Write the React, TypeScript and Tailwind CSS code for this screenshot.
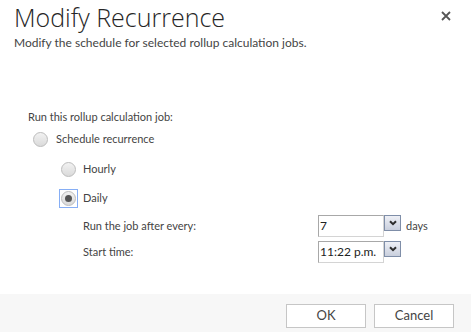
import { useState } from "react";

type RadioProps = {
  checked?: boolean;
  focused?: boolean;
};

function Radio({ checked, focused }: RadioProps) {
  return (
    <span
      className={`flex h-[19px] w-[19px] items-center justify-center ${
        focused ? "border border-[#86aef5]" : "border border-transparent"
      }`}
    >
      <span className="flex h-[15px] w-[15px] items-center justify-center rounded-full border border-[#bcbcbc] bg-gradient-to-b from-[#f2f2f2] to-[#dadada]">
        {checked && <span className="h-[7px] w-[7px] rounded-full bg-[#555]" />}
      </span>
    </span>
  );
}

function DropButton() {
  return (
    <span className="flex h-[16px] w-[17px] items-center justify-center border border-[#7f8ea8] bg-gradient-to-b from-[#eef0f6] to-[#c9cfdd]">
      <svg width="8" height="6" viewBox="0 0 8 6">
        <path d="M1 1.2 L4 4.2 L7 1.2" fill="none" stroke="#2d2d2d" strokeWidth="2" />
      </svg>
    </span>
  );
}

function Combo({ value }: { value: string }) {
  return (
    <div className="flex items-start">
      <div className="flex h-[22px] w-[66px] items-center border border-[#d4d4d4] border-l-[#a8a8a8] border-t-[#a8a8a8] bg-white pl-[1px] text-[12px] text-[#222]">
        {value}
      </div>
      <DropButton />
    </div>
  );
}

export default function App() {
  const [choice] = useState("daily");

  return (
    <div
      className="flex h-[332px] w-[471px] flex-col bg-white text-[#444]"
      style={{ fontFamily: 'Lato, "Open Sans", sans-serif' }}
    >
      <div className="px-[14px]">
        <div className="flex items-start justify-between">
          <h1
            className="text-[25px] font-light leading-[34px] text-[#262626]"
            style={{ fontFamily: '"Open Sans", "Noto Sans", sans-serif' }}
          >
            Modify Recurrence
          </h1>
          <button className="mr-[6px] mt-[11px]">
            <svg width="10" height="10" viewBox="0 0 10 10">
              <path d="M1 1 L9 9 M9 1 L1 9" stroke="#555" strokeWidth="1.8" />
            </svg>
          </button>
        </div>
        <p className="mt-[1px] text-[12px] leading-[16px] text-[#444]">
          Modify the schedule for selected rollup calculation jobs.
        </p>
      </div>

      <div className="mt-[58px] pl-[28px] text-[11px] text-[#444]">
        <div className="leading-[15px]">Run this rollup calculation job:</div>
        <div className="mt-[6px] flex items-center gap-[6px] pl-[3px]">
          <Radio checked={choice === "schedule"} />
          <span>Schedule recurrence</span>
        </div>
        <div className="mt-[11px] flex items-center gap-[5px] pl-[31px]">
          <Radio checked={choice === "hourly"} />
          <span>Hourly</span>
        </div>
        <div className="mt-[10px] flex items-center gap-[5px] pl-[31px]">
          <Radio checked={choice === "daily"} focused />
          <span>Daily</span>
        </div>
        <div className="mt-[7px] grid grid-cols-[235px_auto] items-center gap-y-[4px] pl-[55px]">
          <span>Run the job after every:</span>
          <div className="flex items-center gap-[5px]">
            <Combo value="7" />
            <span>days</span>
          </div>
          <span>Start time:</span>
          <Combo value="11:22 p.m." />
        </div>
      </div>

      <div className="mt-auto flex h-[38px] items-start justify-end gap-[8px] bg-[#f7f7f7] pr-[17px] pt-[10px]">
        <button className="h-[24px] w-[80px] border border-[#c6c6c6] bg-white text-[13px] text-[#444]">
          OK
        </button>
        <button className="h-[24px] w-[80px] border border-[#c6c6c6] bg-white text-[13px] text-[#444]">
          Cancel
        </button>
      </div>
    </div>
  );
}
